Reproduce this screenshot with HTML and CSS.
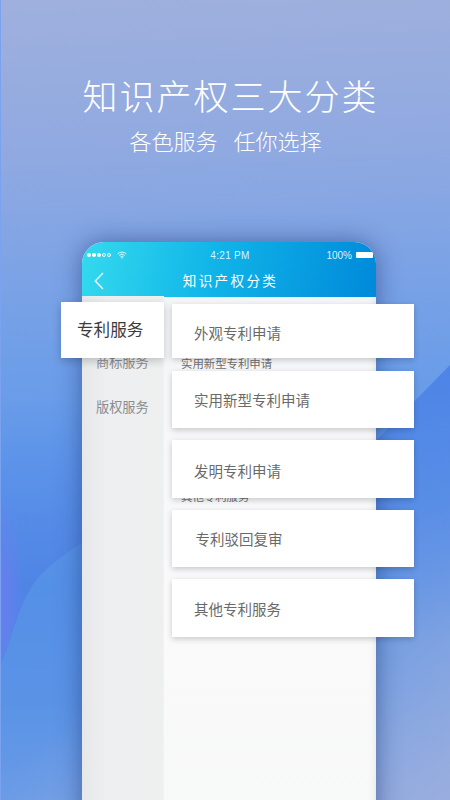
FILE: index.html
```html
<!DOCTYPE html>
<html lang="zh-CN">
<head>
<meta charset="utf-8">
<title>知识产权三大分类</title>
<link rel="stylesheet" href="styles.css">
</head>
<body>
<main class="stage">
  <svg class="decor" viewBox="0 0 450 800" preserveAspectRatio="none" aria-hidden="true">
    <defs>
      <linearGradient id="shapeL" gradientUnits="userSpaceOnUse" x1="0" y1="400" x2="0" y2="640">
        <stop offset="0" stop-color="#4f7fe6" stop-opacity="0"/>
        <stop offset=".8" stop-color="#4b7ce4" stop-opacity=".6"/>
        <stop offset="1" stop-color="#4f82e6" stop-opacity=".7"/>
      </linearGradient>
      <radialGradient id="shapeE" gradientUnits="userSpaceOnUse" cx="0" cy="0" r="1" gradientTransform="translate(0 600) scale(24 110)">
        <stop offset="0" stop-color="#6f7df0" stop-opacity=".85"/>
        <stop offset="1" stop-color="#6f7df0" stop-opacity="0"/>
      </radialGradient>
      <linearGradient id="shapeR" x1="0" y1="0" x2="0" y2="1">
        <stop offset="0" stop-color="#4d84e6"/>
        <stop offset=".5" stop-color="#5288e6" stop-opacity=".7"/>
        <stop offset="1" stop-color="#5a8ee6" stop-opacity="0"/>
      </linearGradient>
    </defs>
    <path d="M0 665 C12 645 16 605 38 578 C50 564 68 552 82 543 L82 400 L0 400 Z" fill="url(#shapeL)"/>
    <path d="M0 665 C12 645 16 605 38 578 L38 480 L0 480 Z" fill="url(#shapeE)"/>
    <path d="M376 441 L388 428 L450 365 L450 640 L376 640 Z" fill="url(#shapeR)"/>
  </svg>

  <header class="hero">
    <h1 class="hero-title">知识产权三大分类</h1>
    <p class="hero-sub"><span>各色服务</span><span>任你选择</span></p>
  </header>

  <section class="phone">
    <div class="phone-head">
      <div class="status">
        <div class="status-left">
          <span class="sig"></span><span class="sig"></span><span class="sig"></span><span class="sig off"></span><span class="sig off"></span>
          <svg class="wifi" viewBox="0 0 12 9" aria-hidden="true"><path d="M.7 3.2a7.6 7.6 0 0 1 10.6 0M2.5 5a5 5 0 0 1 7 0M4.2 6.7a2.5 2.5 0 0 1 3.6 0" fill="none" stroke="#fff" stroke-width="1"/><circle cx="6" cy="8" r=".8" fill="#fff"/></svg>
        </div>
        <span class="clock">4:21 PM</span>
        <div class="status-right"><span>100%</span><span class="battery"></span></div>
      </div>
      <div class="navbar">
        <svg class="back" viewBox="0 0 10 18" aria-hidden="true"><path d="M9 1 1.2 9 9 17" fill="none" stroke="#fff" stroke-width="1.3"/></svg>
        <span class="nav-title">知识产权分类</span>
      </div>
    </div>
    <div class="phone-body">
      <nav class="side">
        <div class="row side-row">专利服务</div>
        <div class="row side-row">商标服务</div>
        <div class="row side-row">版权服务</div>
      </nav>
      <div class="list">
        <div class="row">外观专利申请</div>
        <div class="row">实用新型专利申请</div>
        <div class="row">发明专利申请</div>
        <div class="row">专利驳回复审</div>
        <div class="row">其他专利服务</div>
      </div>
    </div>
  </section>

  <div class="tab-active">专利服务</div>

  <div class="cards">
    <div class="card card-1">外观专利申请</div>
    <div class="card card-2">实用新型专利申请</div>
    <div class="card card-3">发明专利申请</div>
    <div class="card card-4">专利驳回复审</div>
    <div class="card card-5">其他专利服务</div>
  </div>
</main>
</body>
</html>
```
FILE: styles.css
```css
* { box-sizing: border-box; }
html, body { margin: 0; padding: 0; }
body {
  width: 450px;
  height: 800px;
  overflow: hidden;
  font-family: "Noto Sans CJK SC", "Noto Sans", sans-serif;
}
.stage {
  position: relative;
  width: 450px;
  height: 800px;
  overflow: hidden;
  border-left: 1px solid #7aa2ee;
  background:
    linear-gradient(140deg, rgba(154,174,222,0) 66%, #9aaede 100%),
    linear-gradient(178deg, #9fb0dd 0%, #8fa9e1 20%, #74a0e7 40%, #6199ea 56%, #5590e7 72%, #5a93e6 86%, #6c9ce6 100%);
}
.decor {
  position: absolute;
  inset: 0 0 0 -1px;
  width: 450px;
  height: 800px;
}
.hero {
  position: relative;
  padding: 72px 0 0;
  color: #fff;
  text-align: center;
}
.hero-title {
  margin: 0;
  font-size: 35px;
  line-height: 46px;
  font-weight: 300;
  letter-spacing: 2px;
  text-indent: 10px;
}
.hero-sub {
  margin: 6px 0 0;
  display: flex;
  justify-content: center;
  gap: 16px;
  font-size: 22px;
  line-height: 32px;
  font-weight: 300;
}
.phone {
  position: relative;
  width: 294px;
  height: 600px;
  margin: 86px 0 0 81px;
  border-radius: 22px 22px 0 0;
  overflow: hidden;
  box-shadow: 0 0 24px rgba(25,50,110,.55);
  background: #f8f9fa;
}
.phone-head {
  height: 56px;
  color: #fff;
  background: linear-gradient(100deg, #34daee 0%, #10b4e8 45%, #0089da 100%);
}
.status {
  display: grid;
  grid-template-columns: 1fr auto 1fr;
  align-items: center;
  height: 26px;
  padding: 0 3px 0 5px;
  font-family: "Liberation Sans", sans-serif;
  font-size: 10px;
  color: #d8f5fb;
}
.status-left { display: flex; align-items: center; gap: 1px; }
.sig {
  width: 4px;
  height: 4px;
  border-radius: 50%;
  background: #fff;
}
.sig.off { background: none; border: .5px solid #fff; }
.wifi { width: 10px; height: 8px; margin-left: 5px; }
.clock { letter-spacing: .3px; }
.status-right {
  display: flex;
  justify-content: flex-end;
  align-items: center;
  gap: 4px;
}
.battery { width: 17px; height: 6px; background: #fff; border-radius: 1px; }
.navbar {
  position: relative;
  display: flex;
  align-items: center;
  justify-content: center;
  height: 30px;
}
.back {
  position: absolute;
  left: 12px;
  top: 4px;
  width: 10px;
  height: 18px;
}
.nav-title {
  font-size: 13.6px;
  letter-spacing: 2.3px;
  margin: -6px 0 0 3px;
}
.phone-body {
  display: flex;
  height: 544px;
  border-top: 2px solid #cfe7f5;
}
.side {
  width: 82px;
  flex: none;
  margin-top: -4px;
  background: linear-gradient(90deg, #e6e7e8 0%, #eeeff0 30%, #eeefef 100%);
  border-right: 1px solid #f1f2f3;
}
.row {
  height: 44.3px;
  line-height: 44px;
  font-size: 11.4px;
  color: #6e6e6e;
  white-space: nowrap;
}
.side-row {
  padding-left: 14px;
  font-size: 13.2px;
  color: #8a8c8e;
}
.list {
  flex: 1;
  margin-top: -3px;
  padding: 0 0 0 17px;
  background: linear-gradient(180deg, #f4f5f8 0%, #fafafb 60%, #f7f8f8 100%);
  box-shadow: inset -8px 0 8px -8px rgba(0,0,0,.1);
}
.tab-active {
  position: absolute;
  left: 60px;
  top: 302px;
  width: 103px;
  height: 56px;
  padding-left: 16px;
  line-height: 55px;
  font-size: 16.6px;
  color: #3c3c3c;
  background: #fff;
  box-shadow: 0 3px 8px rgba(0,0,0,.2);
}
.cards {
  position: absolute;
  left: 171px;
  top: 304px;
  width: 242px;
  display: flex;
  flex-direction: column;
}
.card {
  display: flex;
  align-items: center;
  padding-left: 22px;
  font-size: 14.5px;
  color: #6a6a6a;
  background: #fff;
  box-shadow: 0 2px 6px rgba(0,0,0,.2);
}
.card-1 { height: 54px; padding-top: 2px; }
.card-2 { height: 57px; margin-top: 13px; }
.card-3 { height: 58px; margin-top: 12px; padding-top: 3px; }
.card-4 { height: 57px; margin-top: 12px; padding-left: 23.5px; }
.card-5 { height: 58px; margin-top: 12px; }
```
